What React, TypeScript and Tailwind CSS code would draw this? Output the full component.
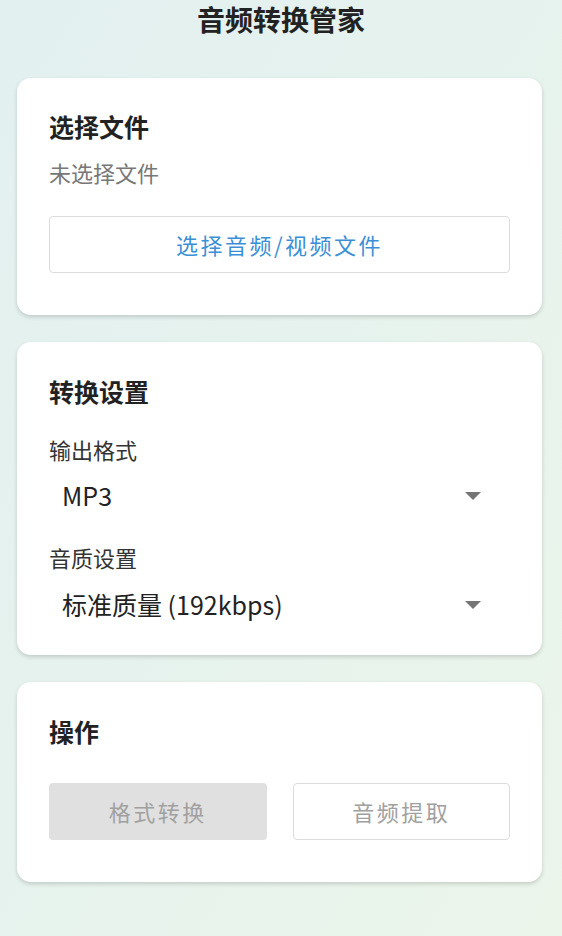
import { useState } from 'react';

const font = { fontFamily: '"Noto Sans CJK SC", "Noto Sans", sans-serif' };

function Caret() {
  return (
    <svg width="16" height="8" viewBox="0 0 16 8" className="shrink-0">
      <path d="M0 0 L16 0 L8 8 Z" fill="#757575" />
    </svg>
  );
}

function SelectRow({ value }: { value: string }) {
  return (
    <div className="flex items-center justify-between h-[48px] pl-[13px] pr-[29px] text-[25px] text-[#222]">
      <span>{value}</span>
      <Caret />
    </div>
  );
}

export default function App() {
  const [fileName] = useState<string | null>(null);

  return (
    <div
      className="w-[562px] h-[936px] overflow-hidden bg-gradient-to-br from-[#e2f0f0] to-[#ebf5ea]"
      style={font}
    >
      <h1 className="h-[38px] flex items-center justify-center text-[28px] font-bold text-[#222]">
        音频转换管家
      </h1>

      <div className="ml-[17px] mr-[20px] mt-[40px] flex flex-col gap-[27px]">
        {/* 选择文件 */}
        <section className="bg-white rounded-[14px] shadow-[0_2px_4px_rgba(0,0,0,0.16)] px-8 pt-[31px] pb-[42px]">
          <h2 className="text-[25px] leading-[34px] font-bold text-[#222]">选择文件</h2>
          <p className="mt-[14px] text-[22px] leading-[30px] text-[#777]">
            {fileName ?? '未选择文件'}
          </p>
          <button className="mt-[29px] w-full h-[57px] rounded-[4px] border border-[#dcdcdc] bg-white text-[22px] tracking-[2.5px] text-[#3a8fd6]">
            选择音频/视频文件
          </button>
        </section>

        {/* 转换设置 */}
        <section className="bg-white rounded-[14px] shadow-[0_2px_4px_rgba(0,0,0,0.16)] px-8 pt-[32px] pb-[26px]">
          <h2 className="text-[25px] leading-[34px] font-bold text-[#222]">转换设置</h2>
          <div className="mt-[26px] text-[22px] leading-[30px] text-[#333]">输出格式</div>
          <div className="mt-[8px]">
            <SelectRow value="MP3" />
          </div>
          <div className="mt-[22px] text-[22px] leading-[30px] text-[#333]">音质设置</div>
          <div className="mt-[9px]">
            <SelectRow value="标准质量 (192kbps)" />
          </div>
        </section>

        {/* 操作 */}
        <section className="bg-white rounded-[14px] shadow-[0_2px_4px_rgba(0,0,0,0.16)] px-8 pt-[32px] pb-[42px]">
          <h2 className="text-[25px] leading-[34px] font-bold text-[#222]">操作</h2>
          <div className="mt-[35px] grid grid-cols-2 gap-[26px]">
            <button
              disabled
              className="h-[57px] rounded-[4px] bg-[#e0e0e0] text-[22px] tracking-[2.5px] text-[#a0a0a0]"
            >
              格式转换
            </button>
            <button
              disabled
              className="h-[57px] rounded-[4px] border border-[#dcdcdc] bg-white text-[22px] tracking-[2.5px] text-[#a0a0a0]"
            >
              音频提取
            </button>
          </div>
        </section>
      </div>
    </div>
  );
}
